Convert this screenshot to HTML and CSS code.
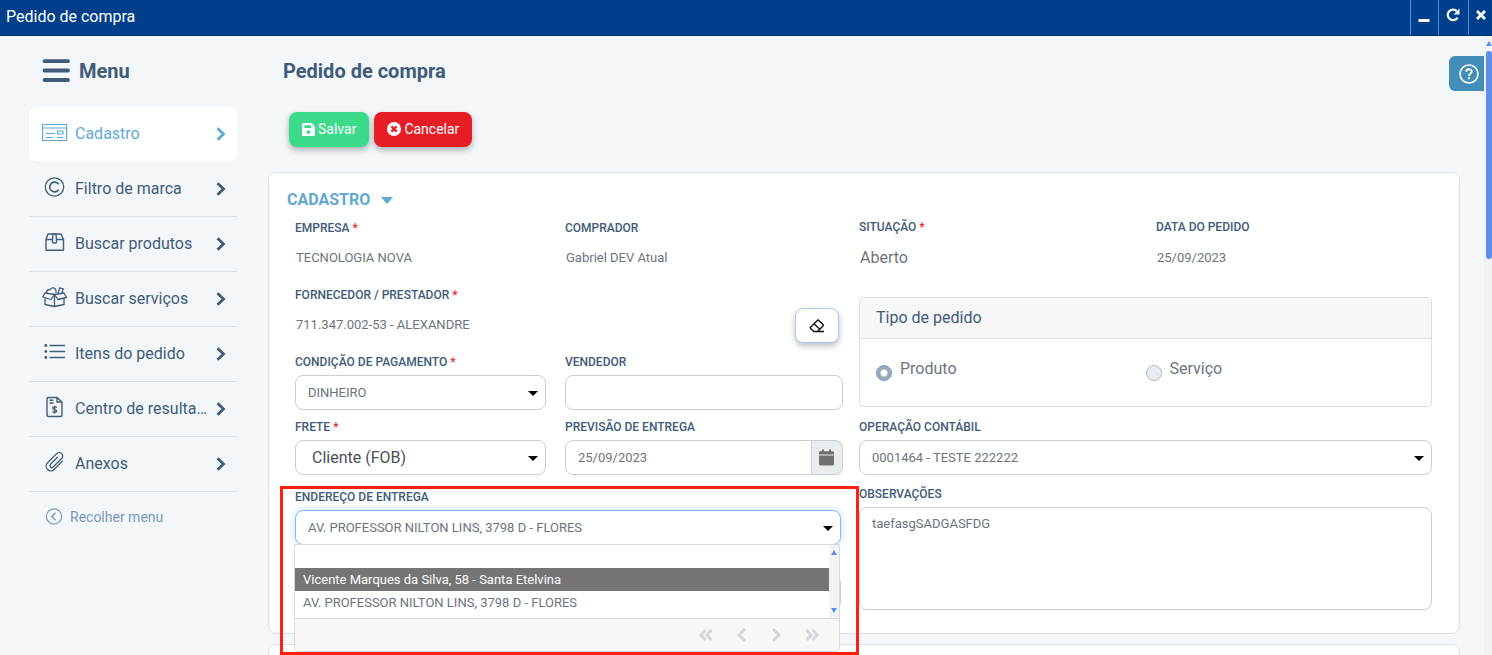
FILE: index.html
```html
<!DOCTYPE html>
<html lang="pt-BR">
<head>
<meta charset="utf-8">
<meta name="viewport" content="width=device-width, initial-scale=1">
<title>Pedido de compra</title>
<link rel="stylesheet" href="styles.css">
</head>
<body>
<header class="titlebar">
  <span class="titlebar-text">Pedido de compra</span>
  <div class="window-actions">
    <button type="button" class="win-btn" aria-label="Minimizar"><svg width="12" height="14" viewBox="0 0 12 14"><path d="M.5 11.500h11" stroke="currentColor" stroke-width="3"/></svg></button>
    <button type="button" class="win-btn win-btn-wide" aria-label="Recarregar"><svg width="14" height="14" viewBox="0 0 14 14"><path d="M11.600 9.600A5.300 5.300 0 1 1 10.700 3" fill="none" stroke="currentColor" stroke-width="2.200"/><path d="M13.500 .5v6H7.500z" fill="currentColor"/></svg></button>
    <button type="button" class="win-btn" aria-label="Fechar"><svg width="10" height="10" viewBox="0 0 10 10"><path d="M1 1l8 8M9 1l-8 8" stroke="currentColor" stroke-width="2.800"/></svg></button>
  </div>
</header>

<div class="workspace">
  <nav class="sidebar" aria-label="Menu">
    <div class="menu-title">
      <svg width="28" height="24" viewBox="0 0 28 24"><path d="M2.500 2.200h23.500M2.500 11.500h23.500M2.500 21h23.500" stroke="currentColor" stroke-width="3.800" stroke-linecap="round"/></svg>
      <span>Menu</span>
    </div>
    <ul class="menu">
      <li><a href="#" class="menu-item active">
        <svg class="menu-icon" viewBox="0 0 26 22"><g fill="none" stroke="currentColor" stroke-width="1.200"><path d="M.6 3.500h24V19.500H.6zM.6 7h24"/><path d="M15.500 10h5.500v3H15.500zM4 12.500h9M4 16.500h7M15 16.500h6.500"/></g></svg>
        <span class="menu-label">Cadastro</span>
        <svg class="chevron" viewBox="0 0 10 14"><path d="M1.500 1.200L7.500 7l-6 5.800" fill="none" stroke="currentColor" stroke-width="2.800"/></svg></a></li>
      <li><a href="#" class="menu-item">
        <svg class="menu-icon" viewBox="0 0 26 22"><g fill="none" stroke="currentColor" stroke-width="1.300"><circle cx="12.500" cy="11" r="9.200"/><path d="M16.600 8.200A4.900 4.900 0 1 0 16.600 13.800" stroke-width="1.600"/></g></svg>
        <span class="menu-label">Filtro de marca</span>
        <svg class="chevron" viewBox="0 0 10 14"><path d="M1.500 1.200L7.500 7l-6 5.800" fill="none" stroke="currentColor" stroke-width="2.800"/></svg></a></li>
      <li><a href="#" class="menu-item">
        <svg class="menu-icon" viewBox="0 0 26 22"><g fill="none" stroke="currentColor" stroke-width="1.400" stroke-linejoin="round"><path d="M4 8.500L6 3h13l2.500 5.500V18.500q0 .8-.8.8H4.800q-.8 0-.8-.8zM4 8.500h6.500M15 8.500h6.500"/><path d="M10.500 8.500V11q0 1 1 1h2q1 0 1-1V8.500L14 3h-3z"/></g></svg>
        <span class="menu-label">Buscar produtos</span>
        <svg class="chevron" viewBox="0 0 10 14"><path d="M1.500 1.200L7.500 7l-6 5.800" fill="none" stroke="currentColor" stroke-width="2.800"/></svg></a></li>
      <li><a href="#" class="menu-item">
        <svg class="menu-icon" viewBox="0 0 26 22"><g fill="none" stroke="currentColor" stroke-width="1.300" stroke-linejoin="round"><path d="M3 7L12.500 8.500 22 7 24.500 11.500 16 13.500 12.500 8.500 9 13.500.8 11z"/><path d="M3 12.500v6L12.500 20.500l9.500-2V12.500M12.500 8.500v12"/><path d="M4.500 7c0-2.500 2-3.500 3.500-3.500C10 .8 13.500 1.500 14 4.500V7M16 7.800l1.700-6 3.500 1L20 7.200"/></g></svg>
        <span class="menu-label">Buscar serviços</span>
        <svg class="chevron" viewBox="0 0 10 14"><path d="M1.500 1.200L7.500 7l-6 5.800" fill="none" stroke="currentColor" stroke-width="2.800"/></svg></a></li>
      <li><a href="#" class="menu-item">
        <svg class="menu-icon" viewBox="0 0 26 22"><g stroke="currentColor" stroke-width="1.300"><path d="M7.500 4.500h15.500M7.500 10.500h15.500M7.500 16.500h15.500"/></g><g fill="currentColor"><circle cx="3.800" cy="4.500" r="1.400"/><circle cx="3.800" cy="10.500" r="1.400"/><circle cx="3.800" cy="16.500" r="1.400"/></g></svg>
        <span class="menu-label">Itens do pedido</span>
        <svg class="chevron" viewBox="0 0 10 14"><path d="M1.500 1.200L7.500 7l-6 5.800" fill="none" stroke="currentColor" stroke-width="2.800"/></svg></a></li>
      <li><a href="#" class="menu-item">
        <svg class="menu-icon" viewBox="0 0 26 22"><g fill="none" stroke="currentColor" stroke-width="1.400"><path d="M6.500 1.500h8.500l5 4.500v12.500q0 2-1.500 2h-12q-1.500 0-1.500-2v-15q0-2 1.500-2zM15 1.500V6h5M7.500 4.300h4M7.500 7h4"/><path d="M14.800 11.800c-.5-1.500-4.300-1.500-4.300.3 0 1.900 4.300 1 4.300 3 0 1.900-3.800 1.700-4.300.2M12.700 9.700v8" stroke-width="1.200"/></g></svg>
        <span class="menu-label">Centro de resultados</span>
        <svg class="chevron" viewBox="0 0 10 14"><path d="M1.500 1.200L7.500 7l-6 5.800" fill="none" stroke="currentColor" stroke-width="2.800"/></svg></a></li>
      <li><a href="#" class="menu-item">
        <svg class="menu-icon" viewBox="0 0 26 22"><g transform="rotate(45 12.500 11)" fill="none" stroke="currentColor" stroke-width="1.300" stroke-linecap="round"><path d="M17.500 5v11.500a4.700 4.700 0 0 1-9.400 0V3.500a3.500 3.500 0 0 1 7 0V15.500a1.900 1.900 0 0 1-3.800 0V5.500"/></g></svg>
        <span class="menu-label">Anexos</span>
        <svg class="chevron" viewBox="0 0 10 14"><path d="M1.500 1.200L7.500 7l-6 5.800" fill="none" stroke="currentColor" stroke-width="2.800"/></svg></a></li>
    </ul>
    <button type="button" class="collapse-btn">
      <svg width="18" height="18" viewBox="0 0 18 18" fill="none" stroke="currentColor" stroke-width="1.200"><circle cx="9" cy="8.500" r="7.600"/><path d="M10.500 4.800L6.800 8.500l3.700 3.700" stroke-width="1.400"/></svg>
      <span>Recolher menu</span>
    </button>
  </nav>

  <main class="content">
    <h1 class="page-title">Pedido de compra</h1>
    <div class="toolbar">
      <button type="button" class="btn btn-save"><svg width="13" height="13" viewBox="0 0 13 13"><path fill="currentColor" fill-rule="evenodd" d="M1.500 0H9.500L13 3.500V11.500Q13 13 11.500 13H1.500Q0 13 0 11.500V1.500Q0 0 1.500 0zM2.300 2.300V5H9V2.300zM6.500 7.200a1.900 1.900 0 1 0 .01 0z"/></svg>Salvar</button>
      <button type="button" class="btn btn-cancel"><svg width="14" height="14" viewBox="0 0 14 14"><circle cx="7" cy="7" r="7" fill="currentColor"/><path d="M4.400 4.400l5.200 5.200M9.600 4.400L4.400 9.600" stroke="#e71d25" stroke-width="2.200"/></svg>Cancelar</button>
    </div>

    <section class="panel">
      <h2 class="panel-title">CADASTRO <svg width="12" height="7" viewBox="0 0 12 7"><path d="M0 0h12L7 6Q6 7 5 6z" fill="currentColor"/></svg></h2>
      <form class="form">
        <div class="left-col">
          <div class="pair">
            <div class="field"><span class="label">EMPRESA <i>*</i></span><output class="value">TECNOLOGIA NOVA</output></div>
            <div class="field"><span class="label">COMPRADOR</span><output class="value">Gabriel DEV Atual</output></div>
          </div>
          <div class="supplier">
            <div class="field"><span class="label">FORNECEDOR / PRESTADOR <i>*</i></span><output class="value">711.347.002-53 - ALEXANDRE</output></div>
            <button type="button" class="erase-btn" aria-label="Limpar fornecedor"><svg width="16" height="14" viewBox="0 0 16 14" fill="none" stroke="currentColor" stroke-width="1.400" stroke-linejoin="round"><path d="M1.500 8.200L8.300 1.400Q9 .8 9.700 1.400L14 5.500Q14.700 6.200 14 6.900L8.500 12.500H4.800L1.500 9.400Q1 8.800 1.500 8.200zM5 4.800l5.800 5.400M6 12.500h9"/></svg></button>
          </div>
          <div class="pair">
            <div class="field"><label class="label" for="pagamento">CONDIÇÃO DE PAGAMENTO <i>*</i></label><div class="select-wrap"><select id="pagamento" class="control"><option>DINHEIRO</option></select></div></div>
            <div class="field"><label class="label" for="vendedor">VENDEDOR</label><input id="vendedor" class="control" type="text"></div>
          </div>
          <div class="pair pair-tight">
            <div class="field"><label class="label" for="frete">FRETE <i>*</i></label><div class="select-wrap"><select id="frete" class="control control-large"><option>Cliente (FOB)</option></select></div></div>
            <div class="field"><label class="label" for="previsao">PREVISÃO DE ENTREGA</label>
              <div class="date-group"><input id="previsao" class="control" type="text" value="25/09/2023"><button type="button" class="date-btn" aria-label="Abrir calendário"><svg width="15" height="17" viewBox="0 0 15 17" fill="currentColor"><path d="M0 6.500h15v8.500Q15 16.500 13.500 16.500h-12Q0 16.500 0 15zM0 5.500V3.500Q0 2.200 1.500 2.200H3V.5h2v1.700h5V.5h2v1.700h1.500Q15 2.200 15 3.500v2z"/></svg></button></div>
            </div>
          </div>
          <div class="field address">
            <label class="label" for="endereco">ENDEREÇO DE ENTREGA</label>
            <div class="select-wrap">
              <select id="endereco" class="control focused"><option>AV. PROFESSOR NILTON LINS, 3798 D - FLORES</option></select>
              <div class="dropdown">
                <div class="dropdown-body">
                  <ul class="options" role="listbox" aria-label="Endereço de entrega">
                    <li role="option"></li>
                    <li role="option" class="highlighted" aria-selected="true">Vicente Marques da Silva, 58 - Santa Etelvina</li>
                    <li role="option">AV. PROFESSOR NILTON LINS, 3798 D - FLORES</li>
                  </ul>
                  <div class="mini-scroll"><span class="arrow-up"></span><span class="arrow-down"></span></div>
                </div>
                <div class="pager">
                  <button type="button" aria-label="Primeira"><svg width="14" height="12" viewBox="0 0 14 12"><path d="M6.500 1L1.800 6l4.700 5M12.500 1L7.800 6l4.700 5"/></svg></button>
                  <button type="button" aria-label="Anterior"><svg width="10" height="14" viewBox="0 0 10 14"><path d="M8 1L2 7l6 6"/></svg></button>
                  <button type="button" aria-label="Próxima"><svg width="10" height="14" viewBox="0 0 10 14"><path d="M2 1l6 6-6 6"/></svg></button>
                  <button type="button" aria-label="Última"><svg width="14" height="12" viewBox="0 0 14 12"><path d="M1.500 1l4.700 5-4.700 5M7.500 1l4.700 5-4.700 5"/></svg></button>
                </div>
              </div>
            </div>
            <div class="marker"></div>
          </div>
          <input class="control extra" type="text" aria-label="Complemento">
        </div>

        <div class="right-col">
          <div class="pair">
            <div class="field"><span class="label">SITUAÇÃO <i>*</i></span><output class="value value-large">Aberto</output></div>
            <div class="field"><span class="label">DATA DO PEDIDO</span><output class="value">25/09/2023</output></div>
          </div>
          <fieldset class="type-box" aria-labelledby="tipo">
            <div class="type-head" id="tipo">Tipo de pedido</div>
            <div class="type-body">
              <label class="radio"><input type="radio" name="tipo" checked><span>Produto</span></label>
              <label class="radio"><input type="radio" name="tipo"><span>Serviço</span></label>
            </div>
          </fieldset>
          <div class="field"><label class="label" for="operacao">OPERAÇÃO CONTÁBIL</label><div class="select-wrap"><select id="operacao" class="control"><option>0001464 - TESTE 222222</option></select></div></div>
          <div class="field notes"><label class="label" for="obs">OBSERVAÇÕES</label><textarea id="obs" class="control" rows="5">taefasgSADGASFDG</textarea></div>
        </div>
      </form>
    </section>
    <section class="panel panel-next"></section>
    <button type="button" class="help-btn" aria-label="Ajuda"><svg width="20" height="20" viewBox="0 0 20 20" fill="none" stroke="currentColor"><circle cx="10" cy="10" r="9" stroke-width="1.600"/><path d="M7.200 7.800C7.300 4.400 12.900 4.500 12.800 7.600 12.700 9.500 10 9.500 10 12" stroke-width="1.800"/><path d="M10 13.300v2" stroke-width="2"/></svg></button>
  </main>

  <div class="scroll-rail"><span class="arrow-up"></span><span class="scroll-thumb"></span></div>
</div>
</body>
</html>
```
FILE: styles.css
```css
* { box-sizing: border-box; }

body {
  margin: 0;
  height: 100vh;
  display: flex;
  flex-direction: column;
  overflow: hidden;
  background: #f3f7fa;
  color: #415b7a;
  font-family: Roboto, "Liberation Sans", sans-serif;
  font-size: 13px;
}

button, input, select, textarea { font: inherit; color: inherit; margin: 0; }
button { border: 0; background: none; padding: 0; cursor: pointer; }
svg { display: block; flex: none; }
ul { list-style: none; margin: 0; padding: 0; }

/* Title bar */
.titlebar {
  flex: none;
  height: 36px;
  display: flex;
  justify-content: space-between;
  background: #003f8c;
  border-bottom: 1px solid #003272;
  color: #fff;
}
.titlebar-text { padding: 0 6px; font-size: 16px; line-height: 34px; }
.window-actions { display: flex; }
.win-btn {
  width: 28px;
  display: flex;
  justify-content: center;
  padding: 9px 1px 0 0;
  border-left: 1px solid #3d92ea;
  color: #fff;
}
.win-btn-wide { width: 30px; padding-top: 8px; }
.win-btn:last-child { width: 24px; padding: 10px 0 0 1px; }

.workspace { flex: 1; min-height: 0; display: flex; }

/* Sidebar */
.sidebar { flex: none; width: 237px; padding: 20px 0 0 29px; }
.menu-title {
  display: flex;
  align-items: center;
  gap: 9px;
  height: 30px;
  padding-left: 13px;
  font-size: 20px;
  font-weight: 700;
}
.menu { margin-top: 21px; }
.menu-item {
  display: flex;
  align-items: center;
  height: 55px;
  padding: 0 11px 2px 13px;
  border-bottom: 1px solid #dbe1e6;
  color: #415b7a;
  font-size: 16px;
  text-decoration: none;
}
.menu-item.active {
  height: 54px;
  margin-bottom: 1px;
  border: 0;
  border-radius: 8px;
  background: #fff;
  color: #5fa9d3;
}
.menu-icon { width: 26px; height: 22px; margin-bottom: 3px; }
.menu-label {
  flex: 1;
  min-width: 0;
  margin: 0 4px 0 7px;
  overflow: hidden;
  text-overflow: ellipsis;
  white-space: nowrap;
}
.chevron { width: 10px; height: 14px; margin-top: 2px; }
.collapse-btn {
  display: flex;
  align-items: center;
  gap: 7px;
  margin: 16px 0 0 16px;
  color: #7c98bb;
  font-size: 14px;
}

/* Content */
.content { position: relative; flex: 1; min-width: 0; padding: 20px 24px 0 31px; }
.page-title { margin: 0 0 0 15px; font-size: 20px; font-weight: 700; line-height: 30px; }
.toolbar { display: flex; gap: 5px; margin: 26px 0 25px 21px; }
.btn {
  display: flex;
  align-items: center;
  gap: 3px;
  height: 35px;
  padding: 0 13px 1px;
  border-radius: 8px;
  box-shadow: 0 3px 6px rgba(0, 0, 0, .3);
  color: #fff;
  font-size: 14px;
}
.btn-save { background: #3bdb8b; }
.btn-cancel { background: #e71d25; }
.help-btn {
  position: absolute;
  top: 20px;
  right: 0;
  width: 35px;
  height: 35px;
  padding-left: 10px;
  border-radius: 6px 0 0 6px;
  background: #438dba;
  color: #fff;
}

.panel {
  padding: 15px 27px 23px 26px;
  border: 1px solid #dce1e6;
  border-radius: 8px;
  background: #fff;
}
.panel-next { margin-top: 10px; height: 60px; }
.panel-title {
  display: flex;
  align-items: center;
  gap: 11px;
  margin: 0 0 7px -8px;
  color: #5fa9d3;
  font-size: 16px;
  font-weight: 700;
  line-height: 24px;
}

/* Form */
.form { display: grid; grid-template-columns: 548fr 573fr; gap: 16px; align-items: start; }
.left-col, .right-col { min-width: 0; }
.left-col { padding-top: 1px; }
.pair { display: grid; grid-template-columns: 251fr 278fr; gap: 19px; margin-bottom: 11px; }
.pair-tight { margin: -2px 0 14px; }
.right-col .pair { grid-template-columns: 278fr 276fr; margin-bottom: 22px; }
.field { min-width: 0; }
.label {
  display: block;
  margin-bottom: 4px;
  font-size: 12px;
  font-weight: 500;
  line-height: 17px;
  white-space: nowrap;
}
.label i { color: #ee2a2a; font-style: normal; }
.value { display: block; height: 35px; padding-left: 1px; color: #6c757d; line-height: 35px; }
.left-col .value { line-height: 33px; }
.value-large { font-size: 16px; }

.control {
  display: block;
  width: 100%;
  height: 35px;
  padding: 0 12px;
  border: 1px solid #c8cdd5;
  border-radius: 8px;
  outline: 0;
  background: #fff;
  color: #6c757d;
}
select.control { appearance: none; }
.control-large { padding: 0 16px; color: #495057; font-size: 16px; }
.control.focused { border-color: #80b9ff; box-shadow: 0 0 8px rgba(128, 185, 255, .45); }
.select-wrap { position: relative; }
.select-wrap::after {
  content: "";
  position: absolute;
  top: 16px;
  right: 8px;
  border: 5px solid transparent;
  border-top-color: #000;
  border-bottom: 0;
  pointer-events: none;
}
textarea.control { height: 103px; padding: 8px 12px; line-height: 16px; resize: none; }

.supplier { display: flex; align-items: flex-end; margin-bottom: 11px; }
.supplier .field { flex: 1; }
.erase-btn {
  display: flex;
  align-items: center;
  justify-content: center;
  width: 44px;
  height: 35px;
  margin-right: 4px;
  border: 1px solid #a9c8f2;
  border-radius: 8px;
  background: #fff;
  box-shadow: 0 3px 6px rgba(0, 0, 0, .25);
  color: #111;
}

.date-group { display: flex; }
.date-group .control { flex: 1; min-width: 0; border-radius: 8px 0 0 8px; }
.date-btn {
  display: flex;
  align-items: center;
  justify-content: center;
  width: 31px;
  padding-right: 1px;
  border: 1px solid #c8cdd5;
  border-left: 0;
  border-radius: 0 8px 8px 0;
  background: #e9ecef;
  color: #6f6f6f;
}

/* Delivery address and its open list */
.address { position: relative; }
.address .select-wrap { margin-right: 2px; }
.dropdown {
  position: absolute;
  z-index: 2;
  top: 34px;
  left: -1px;
  right: 1px;
  border: 1px solid #d8dbde;
  border-radius: 0 0 4px 4px;
  background: #fff;
}
.dropdown-body { display: flex; }
.options { flex: 1; padding-bottom: 4px; color: #6c757d; }
.options li { height: 23px; padding: 0 8px; line-height: 23px; }
.options .highlighted { background: #757575; color: #fff; }
.mini-scroll {
  display: flex;
  flex-direction: column;
  align-items: center;
  justify-content: space-between;
  width: 10px;
  padding: 5px 0;
  background: #f1f3f3;
}
.arrow-up, .arrow-down { border: 3px solid transparent; }
.arrow-up { border-top: 0; border-bottom: 5px solid #5c8ef0; }
.arrow-down { border-bottom: 0; border-top: 5px solid #5c8ef0; }
.pager {
  display: flex;
  align-items: center;
  justify-content: flex-end;
  gap: 24px;
  height: 33px;
  padding-right: 20px;
  border-top: 1px solid #d8dbde;
  border-radius: 0 0 4px 4px;
  background: #f7f7f7;
  color: #d3d6da;
}
.pager path { fill: none; stroke: currentColor; stroke-width: 3; }
.marker {
  position: absolute;
  z-index: 3;
  inset: -3px -16px -110px -15px;
  border: 3px solid #ff2010;
  pointer-events: none;
}
.extra { width: auto; min-width: calc(100% - 2px); margin-top: 30px; }

/* Order type */
.type-box {
  margin: 0 0 12px;
  padding: 0;
  border: 1px solid #dedede;
  border-radius: 4px;
}
.type-head {
  padding: 0 16px;
  border-bottom: 1px solid #dedede;
  border-radius: 4px 4px 0 0;
  background: #f7f7f7;
  font-size: 16px;
  line-height: 40px;
}
.type-body {
  display: grid;
  grid-template-columns: 1fr 1fr;
  height: 67px;
  padding: 17px 16px;
  color: #6c757d;
  font-size: 16px;
  line-height: 26px;
}
.radio { display: flex; gap: 8px; }
.radio input {
  appearance: none;
  flex: none;
  width: 16px;
  height: 16px;
  margin-top: 9px;
  border: 1px solid #b5bbc2;
  border-radius: 50%;
  background: #e9ecef;
}
.radio input:checked {
  border-color: #6d96e8;
  background: radial-gradient(circle, #fff 3px, #9da8b5 4px);
}
.notes { margin-top: 11px; }

/* Page scrollbar */
.scroll-rail {
  display: flex;
  flex-direction: column;
  align-items: center;
  gap: 5px;
  width: 8px;
  padding: 5px 0 0 2px;
  background: #f1f3f3;
}
.scroll-thumb { width: 6px; height: 208px; border-radius: 3px; background: #5c8ef0; }
```
